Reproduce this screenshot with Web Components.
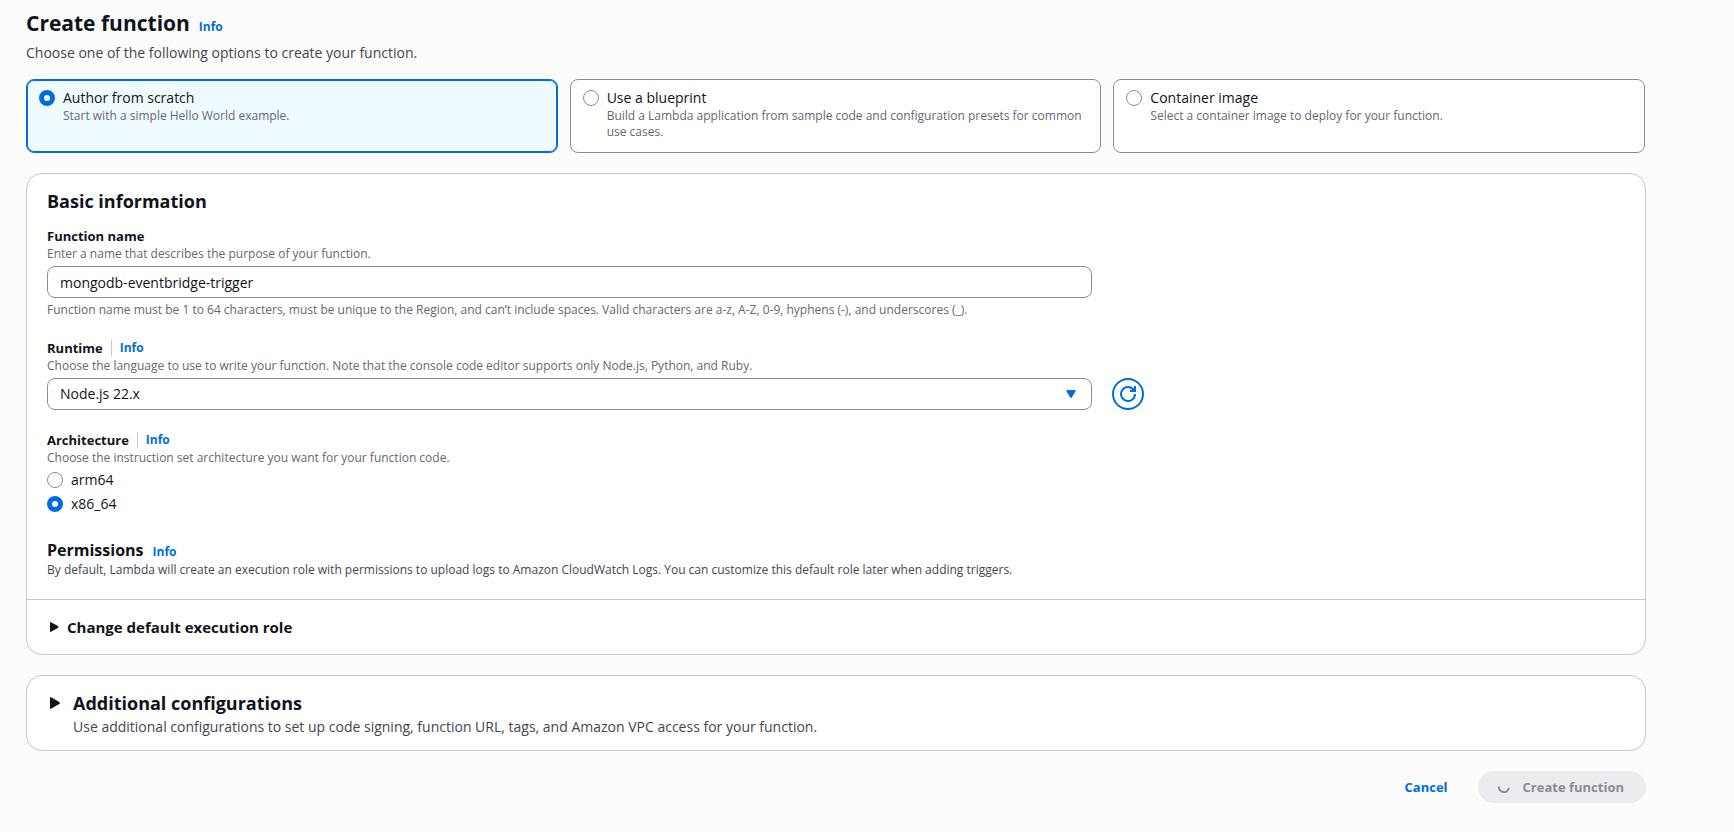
<!DOCTYPE html>
<html lang="en">
<head>
<meta charset="utf-8">
<meta name="viewport" content="width=device-width, initial-scale=1">
<title>Create function</title>
<style>
  body {
    margin: 0;
    background: #fcfcfd;
    color: #0f141a;
    font: 14px/20px "Open Sans", "Noto Sans", sans-serif;
    --accent: #006ce0;
    --muted: #656871;
    --secondary: #424650;
    --control-border: #8c8c94;
    --divider: #c6c6cd;
  }
</style>
</head>
<body>
<create-function-page></create-function-page>

<script>
  const define = (name, html) => {
    const template = document.createElement('template');
    template.innerHTML = html;
    customElements.define(name, class extends HTMLElement {
      constructor() {
        super();
        this.attachShadow({ mode: 'open' }).append(template.content.cloneNode(true));
      }
    });
  };

  const radioCss = `
    input[type=radio] {
      appearance: none; box-sizing: border-box; flex: none;
      width: 16px; height: 16px; margin: 2px 0;
      border: 1px solid var(--control-border); border-radius: 50%; background: #fff;
    }
    input[type=radio]:checked { border: 5px solid var(--accent); }
  `;

  define('info-link', `
    <style>
      :host { display: inline-block; font-size: 12px; line-height: 16px; font-weight: 700; }
      a { color: var(--accent); text-decoration: none; }
    </style>
    <a href="#info">Info</a>
  `);

  define('page-header', `
    <style>
      :host { display: block; }
      .title { display: flex; align-items: baseline; gap: 9px; }
      h1 { margin: 0; font-size: 21px; line-height: 26px; font-weight: 700; }
      p { margin: 7px 0 0; color: var(--secondary); }
    </style>
    <div class="title"><h1><slot></slot></h1><info-link></info-link></div>
    <p><slot name="description"></slot></p>
  `);

  define('origin-tiles', `
    <style>
      :host { display: block; }
      fieldset { border: 0; margin: 0; padding: 0; min-width: 0;
        display: grid; grid-template-columns: repeat(3, 1fr); gap: 12px; }
      label { box-sizing: border-box; display: flex; gap: 8px; padding: 8px 12px 12px;
        border: 1px solid var(--control-border); border-radius: 8px; background: #fff; }
      label:has(:checked) { border-color: var(--accent); background: #f0fbff;
        box-shadow: inset 0 0 0 1px var(--accent); }
      span { display: block; }
      small { display: block; font-size: 12px; line-height: 16px; color: var(--muted); }
      ${radioCss}
    </style>
    <fieldset aria-label="Function origin">
      <label><input type="radio" name="origin" checked><span>Author from scratch
        <small>Start with a simple Hello World example.</small></span></label>
      <label><input type="radio" name="origin"><span>Use a blueprint
        <small>Build a Lambda application from sample code and configuration presets for common use cases.</small></span></label>
      <label><input type="radio" name="origin"><span>Container image
        <small>Select a container image to deploy for your function.</small></span></label>
    </fieldset>
  `);

  define('panel-box', `
    <style>
      :host { display: block; border: 1px solid var(--divider); border-radius: 16px; background: #fff; }
      ::slotted([slot=footer]) { border-top: 1px solid var(--divider); }
    </style>
    <slot></slot><slot name="footer"></slot>
  `);

  define('name-field', `
    <style>
      :host { display: grid; grid-template-columns: repeat(3, 1fr); column-gap: 20px; }
      .field { grid-column: span 2; }
      label { display: block; font-size: 13px; font-weight: 700; }
      .hint { font-size: 12px; line-height: 16px; color: var(--muted); }
      input { display: block; box-sizing: border-box; width: 100%; height: 32px; margin: 4px 0;
        padding: 0 12px; border: 1px solid var(--control-border); border-radius: 8px;
        background: #fff; color: inherit; font: inherit; }
    </style>
    <div class="field">
      <label for="name">Function name</label>
      <div class="hint">Enter a name that describes the purpose of your function.</div>
      <input id="name" type="text" value="mongodb-eventbridge-trigger">
      <div class="hint">Function name must be 1 to 64 characters, must be unique to the Region, and can’t include spaces. Valid characters are a-z, A-Z, 0-9, hyphens (-), and underscores (_).</div>
    </div>
  `);

  define('runtime-field', `
    <style>
      :host { display: grid; grid-template-columns: repeat(3, 1fr); column-gap: 20px; align-items: end; }
      .field { grid-column: span 2; }
      .head { display: flex; align-items: center; gap: 8px; }
      label { font-size: 13px; font-weight: 700; }
      .head info-link { border-left: 1px solid var(--divider); padding-left: 8px; }
      .hint { font-size: 12px; line-height: 16px; color: var(--muted); }
      .picker { display: grid; align-items: center; margin-top: 4px; }
      .picker > * { grid-area: 1 / 1; }
      select { appearance: none; box-sizing: border-box; width: 100%; height: 32px; padding: 0 36px 0 12px;
        border: 1px solid var(--control-border); border-radius: 8px;
        background: #fff; color: inherit; font: inherit; }
      .caret { justify-self: end; margin-right: 16px; pointer-events: none; }
      button { display: grid; place-items: center; width: 32px; height: 32px; padding: 0;
        border: 2px solid var(--accent); border-radius: 50%; background: #fff; color: var(--accent); }
    </style>
    <div class="field">
      <div class="head"><label for="runtime">Runtime</label><info-link></info-link></div>
      <div class="hint">Choose the language to use to write your function. Note that the console code editor supports only Node.js, Python, and Ruby.</div>
      <div class="picker">
        <select id="runtime"><option>Node.js 22.x</option></select>
        <svg class="caret" width="10" height="8" viewBox="0 0 10 8" aria-hidden="true"><path d="M.6 .6h8.8L5.4 7.4h-.8z" fill="#006ce0" stroke="#006ce0" stroke-linejoin="round"/></svg>
      </div>
    </div>
    <button type="button" aria-label="Refresh runtimes">
      <svg width="16" height="16" viewBox="0 0 16 16" fill="none" stroke="currentColor" stroke-width="2" aria-hidden="true">
        <path d="M10 5h5V0M15 8a7 7 0 1 1-1.2-3.9"/>
      </svg>
    </button>
  `);

  define('architecture-field', `
    <style>
      :host { display: block; }
      fieldset { border: 0; margin: 0; padding: 0; min-width: 0; }
      .head { display: flex; align-items: center; gap: 8px; }
      .name { font-size: 13px; font-weight: 700; }
      .head info-link { border-left: 1px solid var(--divider); padding-left: 8px; }
      .hint { font-size: 12px; line-height: 16px; color: var(--muted); }
      label { display: flex; gap: 8px; margin-top: 4px; }
      ${radioCss}
    </style>
    <fieldset aria-labelledby="arch">
      <div class="head"><span class="name" id="arch">Architecture</span><info-link></info-link></div>
      <div class="hint">Choose the instruction set architecture you want for your function code.</div>
      <label><input type="radio" name="arch">arm64</label>
      <label><input type="radio" name="arch" checked>x86_64</label>
    </fieldset>
  `);

  define('permissions-note', `
    <style>
      :host { display: block; }
      .title { display: flex; align-items: baseline; gap: 9px; }
      h3 { margin: 0; font-size: 16px; line-height: 24px; font-weight: 700; }
      p { margin: 0; font-size: 12px; line-height: 16px; color: var(--secondary); }
    </style>
    <div class="title"><h3>Permissions</h3><info-link></info-link></div>
    <p>By default, Lambda will create an execution role with permissions to upload logs to Amazon CloudWatch Logs. You can customize this default role later when adding triggers.</p>
  `);

  define('basic-information', `
    <style>
      :host { display: block; padding: 16px 20px 21px; }
      h2 { margin: 0 0 14px; font-size: 18px; line-height: 22px; font-weight: 700; }
      .fields { display: grid; gap: 20px; }
      permissions-note { margin-top: 4px; }
    </style>
    <h2>Basic information</h2>
    <div class="fields">
      <name-field></name-field>
      <runtime-field></runtime-field>
      <architecture-field></architecture-field>
      <permissions-note></permissions-note>
    </div>
  `);

  define('role-expander', `
    <style>
      :host { display: block; padding: 15px 20px; }
      h3 { margin: 0; }
      button { display: flex; align-items: center; gap: 8px; padding: 0 0 0 3px; border: 0; background: none;
        color: inherit; font: 700 15px/24px "Open Sans", "Noto Sans", sans-serif; text-align: left; }
    </style>
    <h3><button type="button" aria-expanded="false">
      <svg width="9" height="10" viewBox="0 0 9 10" aria-hidden="true"><path d="M.5 .5v9L8 5.4v-.8z" fill="#0f141a" stroke="#0f141a" stroke-linejoin="round"/></svg>
      Change default execution role
    </button></h3>
  `);

  define('configuration-expander', `
    <style>
      :host { display: grid; grid-template-columns: auto 1fr; column-gap: 13px; row-gap: 2px; padding: 15px 20px 13px 23px; }
      svg { grid-row: 1; align-self: center; }
      h2 { margin: 0; }
      button { display: block; padding: 0; border: 0; background: none; color: inherit;
        font: 700 18px/24px "Open Sans", "Noto Sans", sans-serif; text-align: left; }
      p { grid-column: 2; margin: 0; color: var(--secondary); }
    </style>
    <svg width="10" height="12" viewBox="0 0 10 12" aria-hidden="true"><path d="M.5 .5v11L9.4 6.4v-.8z" fill="#0f141a" stroke="#0f141a" stroke-linejoin="round"/></svg>
    <h2><button type="button" aria-expanded="false">Additional configurations</button></h2>
    <p>Use additional configurations to set up code signing, function URL, tags, and Amazon VPC access for your function.</p>
  `);

  define('form-actions', `
    <style>
      :host { display: flex; justify-content: flex-end; gap: 8px; }
      button { display: flex; align-items: center; gap: 11px; height: 32px; padding: 0 22px; border: 0;
        border-radius: 16px; background: none; color: var(--accent);
        font: 700 13px/20px "Open Sans", "Noto Sans", sans-serif; }
      button:disabled { padding: 0 22px 0 18px; background: #ebebf0; color: #8c8c94; }
    </style>
    <button type="button">Cancel</button>
    <button type="submit" disabled>
      <svg width="16" height="16" viewBox="0 0 16 16" fill="none" stroke="currentColor" stroke-width="2" aria-hidden="true"><path d="M3 7.5a5 5 0 0 0 9.9 1.4"/></svg>
      Create function
    </button>
  `);

  define('create-function-page', `
    <style>
      :host { display: block; }
      main { padding: 10px 88px 28px 26px; }
      origin-tiles { margin: 16px 1px 20px 0; }
      .panels { display: grid; gap: 20px; }
    </style>
    <main>
      <page-header>Create function<span slot="description">Choose one of the following options to create your function.</span></page-header>
      <origin-tiles></origin-tiles>
      <div class="panels">
        <panel-box>
          <basic-information></basic-information>
          <role-expander slot="footer"></role-expander>
        </panel-box>
        <panel-box><configuration-expander></configuration-expander></panel-box>
        <form-actions></form-actions>
      </div>
    </main>
  `);
</script>
</body>
</html>
